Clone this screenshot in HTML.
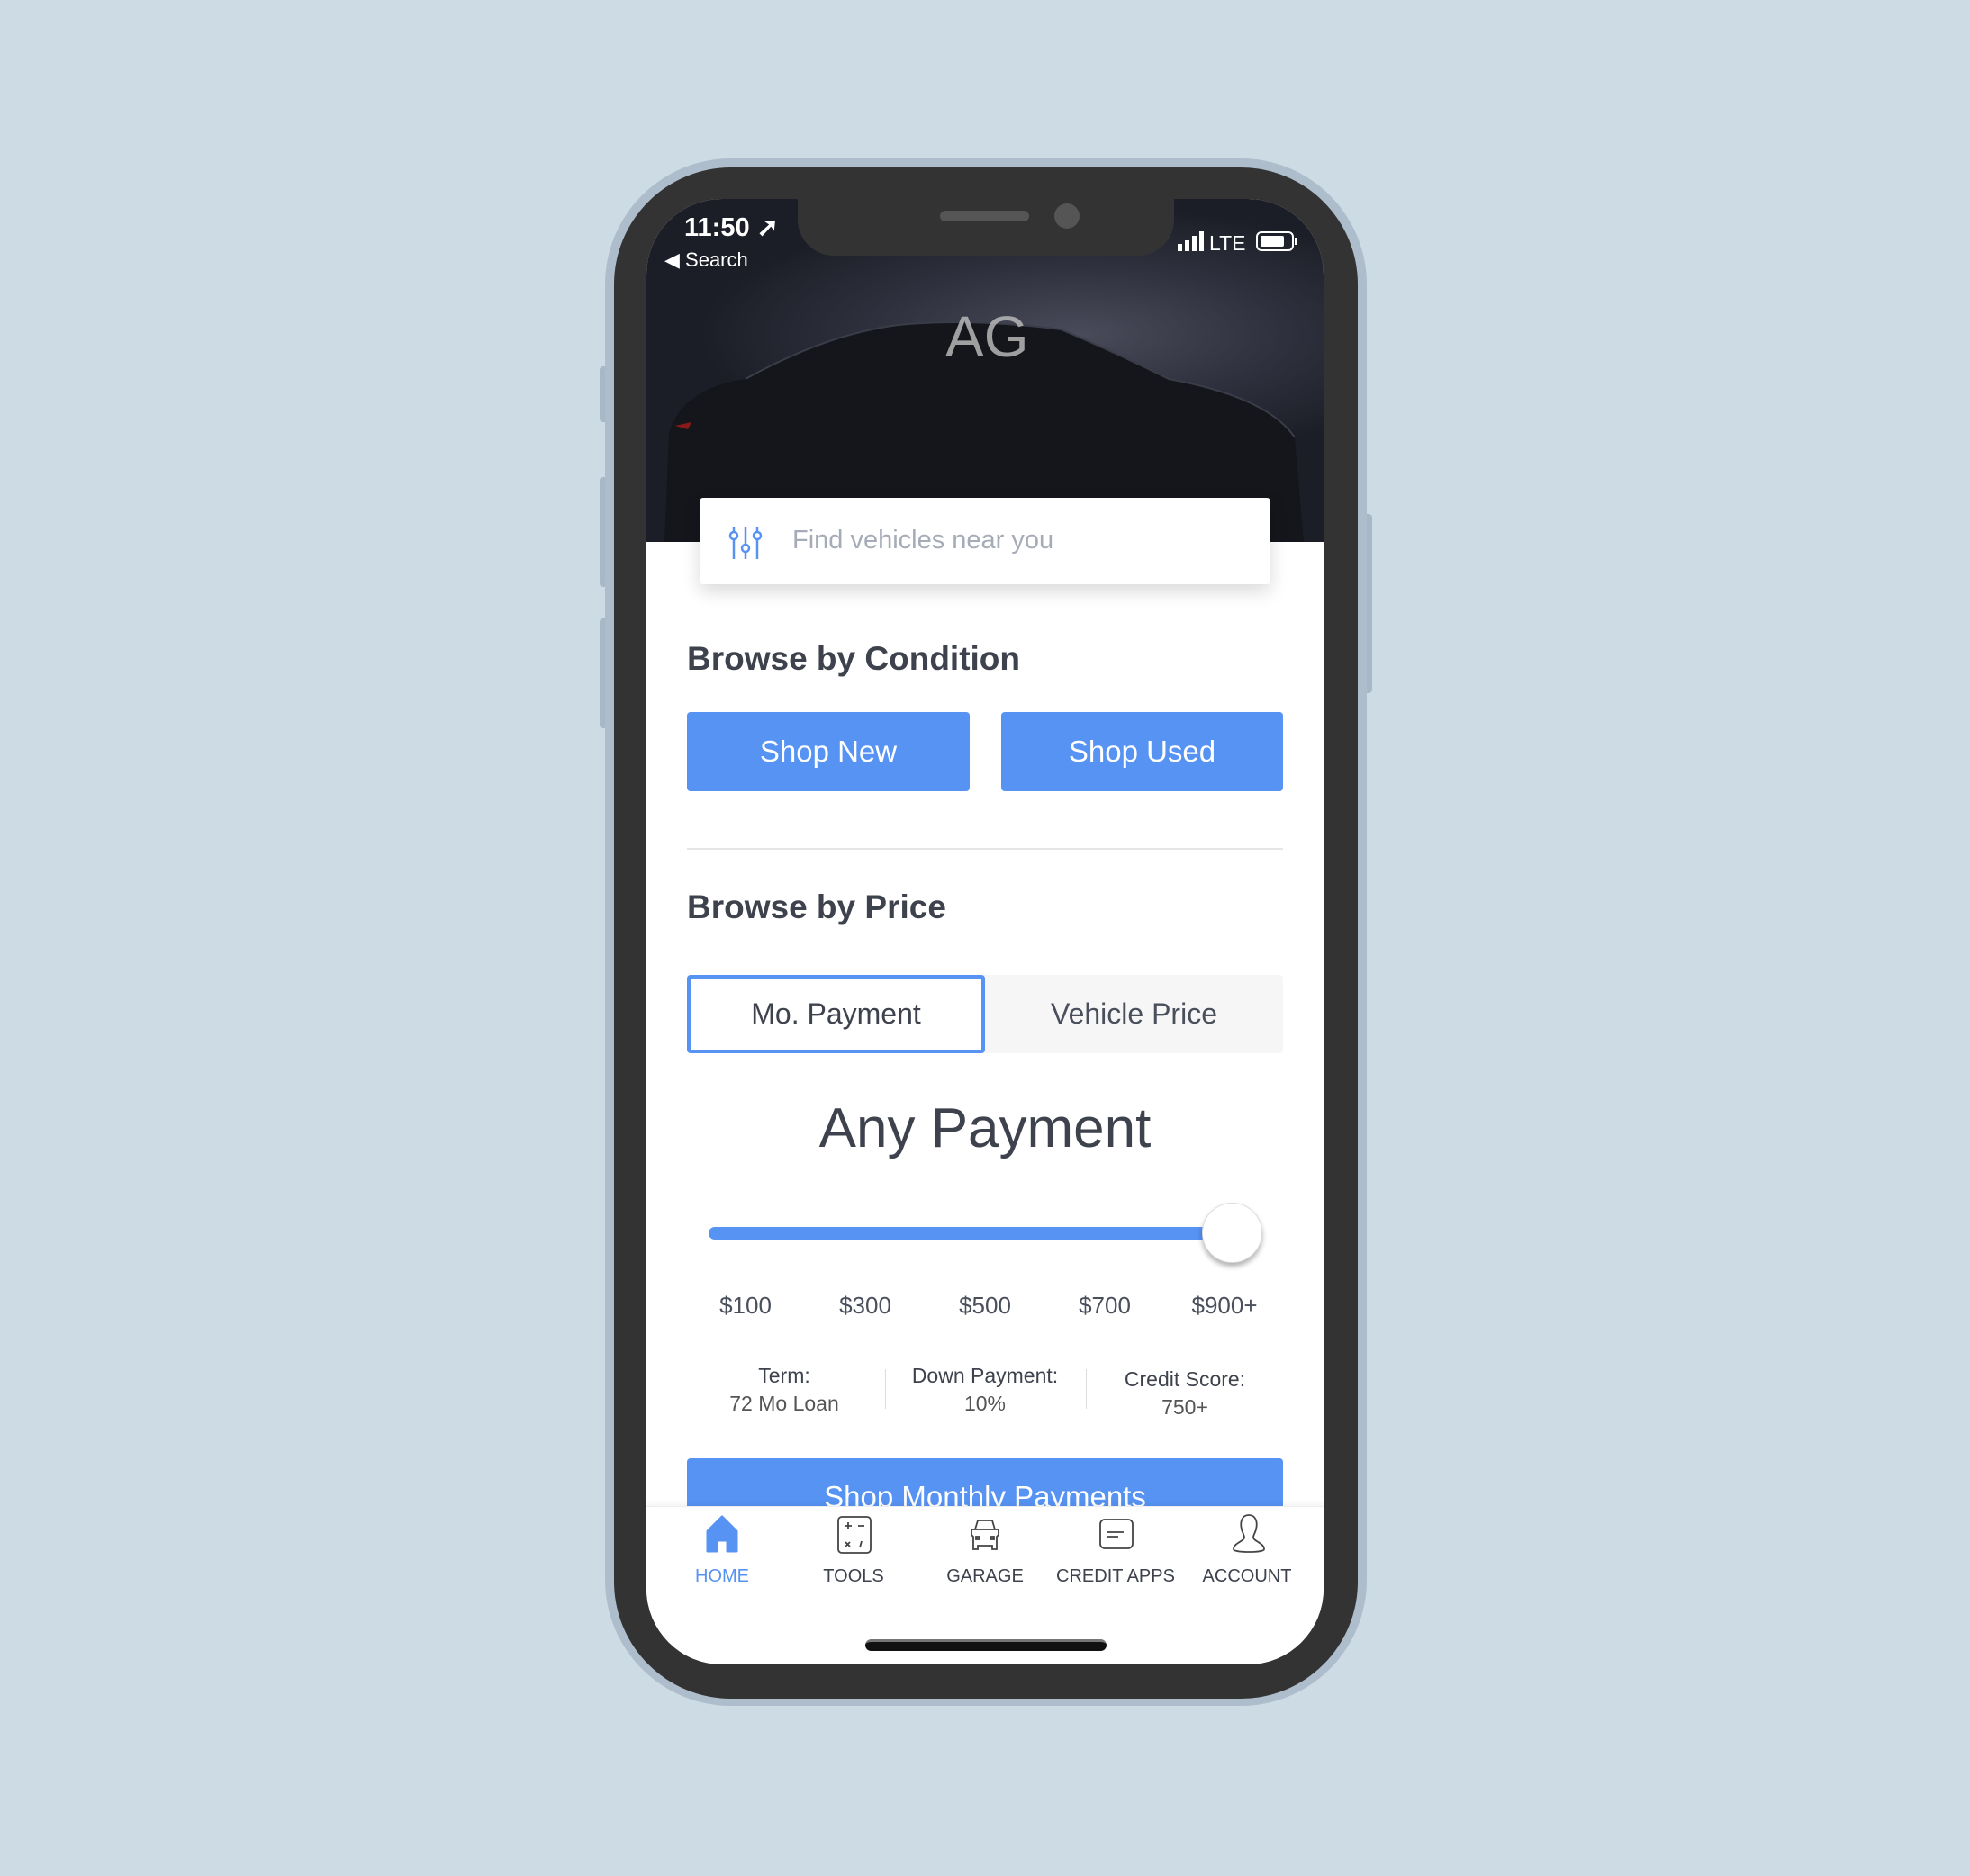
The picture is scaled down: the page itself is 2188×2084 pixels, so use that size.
<!DOCTYPE html>
<html><head><meta charset="utf-8"><style>
*{margin:0;padding:0;box-sizing:border-box}
body{width:2188px;height:2084px;background:#cddbe5;position:relative;overflow:hidden;font-family:"Liberation Sans",sans-serif;color:#3d424d}
.a{position:absolute}
.t{position:absolute;white-space:nowrap}
.c{transform:translateX(-50%);text-align:center}
#w{position:absolute;left:-4px;top:-3px;width:2188px;height:2084px}
</style></head><body><div id="w">
<!-- side buttons -->
<div class="a" style="left:670px;top:410px;width:12px;height:62px;background:#a9b8c7;border-radius:4px"></div>
<div class="a" style="left:670px;top:533px;width:12px;height:122px;background:#a9b8c7;border-radius:4px"></div>
<div class="a" style="left:670px;top:690px;width:12px;height:122px;background:#a9b8c7;border-radius:4px"></div>
<div class="a" style="left:1516px;top:574px;width:12px;height:199px;background:#a9b8c7;border-radius:4px"></div>
<!-- phone -->
<div class="a" style="left:676px;top:179px;width:846px;height:1719px;background:#aebdcc;border-radius:140px"></div>
<div class="a" style="left:686px;top:189px;width:826px;height:1701px;background:#333333;border-radius:130px"></div>
<div class="a" style="left:722px;top:224px;width:752px;height:1628px;background:#fff;border-radius:84px;overflow:hidden">
  <div class="a" style="left:0;top:0;width:752px;height:381px;background:radial-gradient(ellipse 420px 140px at 480px 150px,#4a4b5a 0%,#2e303d 55%,#1c1e27 100%)"></div>
  <svg class="a" style="left:0;top:0" width="752" height="381" viewBox="0 0 752 381">
    <path d="M20 381 L25 260 Q40 210 110 200 Q200 150 280 140 Q360 132 460 145 Q520 170 580 200 Q690 220 720 265 L730 381 Z" fill="#14161c"/>
    <path d="M110 200 Q200 150 280 140 Q360 132 460 145 Q520 170 580 200 Q690 220 720 265" fill="none" stroke="#3a3c48" stroke-width="2"/>
    <path d="M32 252 l18 -4 l-4 8 z" fill="#8a1a1a"/>
    <text x="332" y="175" font-family="Liberation Sans" font-size="64" fill="#b8b8b8" opacity="0.85">AG</text>
  </svg>
  <div class="t" style="left:42px;top:14px;font-size:29px;font-weight:bold;color:#fff">11:50 ➚</div>
  <div class="t" style="left:20px;top:55px;font-size:22px;color:#fff">◀ Search</div>
  <svg class="a" style="left:590px;top:34px" width="140" height="26">
    <rect x="0" y="16" width="5" height="8" fill="#fff"/><rect x="8" y="12" width="5" height="12" fill="#fff"/><rect x="16" y="7" width="5" height="17" fill="#fff"/><rect x="24" y="2" width="5" height="22" fill="#fff"/>
    <text x="35" y="23" font-size="23" fill="#fff" font-family="Liberation Sans">LTE</text>
    <rect x="88" y="3" width="40" height="20" rx="5" fill="none" stroke="#fff" stroke-width="2"/><rect x="92" y="7" width="26" height="12" rx="2" fill="#fff"/><rect x="130" y="9" width="3" height="8" fill="#fff"/>
  </svg>
  <div class="a" style="left:59px;top:332px;width:634px;height:96px;background:#fff;border-radius:4px;box-shadow:0 8px 20px rgba(0,0,0,.15)"></div>
  <svg class="a" style="left:90px;top:362px" width="40" height="40" viewBox="0 0 40 40" fill="none" stroke="#5793f3" stroke-width="2.5">
    <line x1="7" y1="2" x2="7" y2="38"/><line x1="20" y1="2" x2="20" y2="38"/><line x1="33" y1="2" x2="33" y2="38"/>
    <circle cx="7" cy="12" r="4" fill="#fff"/><circle cx="20" cy="26" r="4" fill="#fff"/><circle cx="33" cy="12" r="4" fill="#fff"/>
  </svg>
  <div class="t" style="left:162px;top:363px;font-size:29px;color:#a6abb8">Find vehicles near you</div>
  <div class="t" style="left:45px;top:490px;font-size:37px;font-weight:bold">Browse by Condition</div>
  <div class="a" style="left:45px;top:570px;width:314px;height:88px;background:#5793f3;border-radius:4px;color:#fff;font-size:33px;text-align:center;line-height:88px">Shop New</div>
  <div class="a" style="left:394px;top:570px;width:313px;height:88px;background:#5793f3;border-radius:4px;color:#fff;font-size:33px;text-align:center;line-height:88px">Shop Used</div>
  <div class="a" style="left:45px;top:721px;width:662px;height:2px;background:#e6e6e6"></div>
  <div class="t" style="left:45px;top:766px;font-size:37px;font-weight:bold">Browse by Price</div>
  <div class="a" style="left:45px;top:862px;width:662px;height:87px;background:#f6f6f6;border-radius:4px"></div>
  <div class="a" style="left:45px;top:862px;width:331px;height:87px;background:#fff;border:4px solid #5793f3;border-radius:4px;font-size:32px;text-align:center;line-height:79px">Mo. Payment</div>
  <div class="a" style="left:376px;top:862px;width:331px;height:87px;font-size:32px;text-align:center;line-height:87px;color:#4a4f5c">Vehicle Price</div>
  <div class="t c" style="left:376px;top:997px;font-size:62px">Any Payment</div>
  <div class="a" style="left:69px;top:1142px;width:590px;height:14px;background:#5793f3;border-radius:7px"></div>
  <div class="a" style="left:617px;top:1115px;width:67px;height:67px;background:#fff;border-radius:50%;border:1px solid #ddd;box-shadow:0 4px 6px rgba(0,0,0,.3)"></div>
  <div class="t c" style="left:110px;top:1214px;font-size:26px;color:#4a4f5c">$100</div>
  <div class="t c" style="left:243px;top:1214px;font-size:26px;color:#4a4f5c">$300</div>
  <div class="t c" style="left:376px;top:1214px;font-size:26px;color:#4a4f5c">$500</div>
  <div class="t c" style="left:509px;top:1214px;font-size:26px;color:#4a4f5c">$700</div>
  <div class="t c" style="left:642px;top:1214px;font-size:26px;color:#4a4f5c">$900+</div>
  <div class="t c" style="left:153px;top:1292px;font-size:23px;line-height:31px">Term:<br><span style="color:#555">72 Mo Loan</span></div>
  <div class="t c" style="left:376px;top:1292px;font-size:23px;line-height:31px">Down Payment:<br><span style="color:#555">10%</span></div>
  <div class="t c" style="left:598px;top:1296px;font-size:23px;line-height:31px">Credit Score:<br><span style="color:#555">750+</span></div>
  <div class="a" style="left:265px;top:1300px;width:1px;height:44px;background:#ddd"></div>
  <div class="a" style="left:488px;top:1300px;width:1px;height:44px;background:#ddd"></div>
  <div class="a" style="left:45px;top:1399px;width:662px;height:80px;background:#5793f3;border-radius:4px;color:#fff;font-size:33px;text-align:center;padding-top:24px">Shop Monthly Payments</div>
  <div class="a" style="left:0;top:1452px;width:752px;height:176px;background:#fff;border-top:1px solid #eee;box-shadow:0 -3px 6px rgba(0,0,0,.05)"></div>
  <svg class="a" style="left:64px;top:1462px" width="40" height="44" viewBox="0 0 40 44"><path d="M4 18 L20 2 L36 18 V40 H26 V28 H14 V40 H4 Z" fill="#5793f3" stroke="#5793f3" stroke-width="3" stroke-linejoin="round"/></svg>
  <svg class="a" style="left:211px;top:1462px" width="40" height="44" viewBox="0 0 40 44" fill="none" stroke="#444" stroke-width="1.8"><rect x="2" y="2" width="36" height="40" rx="4"/><path d="M9 12h8M13 8v8M24 12h7M10 30l5 5M15 30l-5 5M28 29l-2 7"/></svg>
  <svg class="a" style="left:356px;top:1464px" width="40" height="40" viewBox="0 0 40 40" fill="none" stroke="#444" stroke-width="1.8"><path d="M9 14 L12 4 H28 L31 14 H35 V20 L33 22 V36 H28 V32 H12 V36 H7 V22 L5 20 V14 Z M9 14 H31"/><rect x="10" y="22" width="4" height="3"/><rect x="26" y="22" width="4" height="3"/></svg>
  <svg class="a" style="left:502px;top:1464px" width="40" height="40" viewBox="0 0 40 40" fill="none" stroke="#444" stroke-width="1.8"><rect x="2" y="3" width="36" height="32" rx="5"/><path d="M10 17h18M10 22h12"/></svg>
  <svg class="a" style="left:649px;top:1460px" width="40" height="46" viewBox="0 0 40 46" fill="none" stroke="#444" stroke-width="1.8"><path d="M20 2 C12 2 10 10 12 18 C13 22 15 24 15 27 C15 31 3 33 3 40 C3 44 37 44 37 40 C37 33 25 31 25 27 C25 24 27 22 28 18 C30 10 28 2 20 2 Z"/></svg>
  <div class="t c" style="left:84px;top:1519px;font-size:20px;color:#5793f3">HOME</div>
  <div class="t c" style="left:230px;top:1519px;font-size:20px">TOOLS</div>
  <div class="t c" style="left:376px;top:1519px;font-size:20px">GARAGE</div>
  <div class="t c" style="left:521px;top:1519px;font-size:20px">CREDIT APPS</div>
  <div class="t c" style="left:667px;top:1519px;font-size:20px">ACCOUNT</div>
  <div class="a" style="left:243px;top:1600px;width:268px;height:13px;background:#111;border-radius:7px;border-top:3px solid #777"></div>
</div>
<div class="a" style="left:890px;top:220px;width:418px;height:67px;background:#333;border-radius:0 0 40px 40px"></div>
<div class="a" style="left:1048px;top:237px;width:99px;height:12px;background:#555;border-radius:6px"></div>
<div class="a" style="left:1175px;top:229px;width:28px;height:28px;background:#555;border-radius:50%"></div>
</div></body></html>
